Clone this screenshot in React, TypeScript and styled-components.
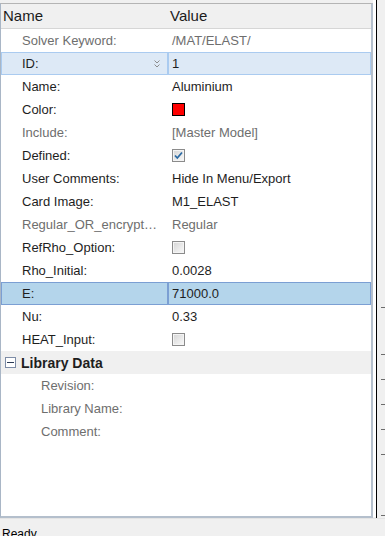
import React from "react";
import styled, { createGlobalStyle, css } from "styled-components";

const GlobalStyle = createGlobalStyle`
  html, body { margin: 0; padding: 0; background: #f0f0f0; }
  body { font-family: "Liberation Sans", Arial, sans-serif; }
  * { box-sizing: border-box; }
`;

const Frame = styled.div`
  width: 385px;
  height: 536px;
  display: flex;
  flex-direction: column;
  background: #f0f0f0;
  overflow: hidden;
`;

const Main = styled.div`
  display: flex;
  height: 518px;
  flex-shrink: 0;
`;

const Panel = styled.div`
  width: 373px;
  height: 515px;
  margin-top: 3px;
  background: #ffffff;
  border-top: 1px solid #b4b4b4;
  border-left: 1px solid #a9b6c6;
  border-right: 2px solid #b4bfcc;
  border-bottom: 2px solid #b4bfcc;
  display: flex;
  flex-direction: column;
`;

const Header = styled.div`
  display: grid;
  grid-template-columns: 167px 1fr;
  height: 25px;
  background: #f0f0f0;
  border-bottom: 1px solid #d6d6d6;
  font-size: 15px;
  line-height: 24px;
  color: #1b1b1b;
`;

const HeaderCell = styled.div`
  padding-left: 2px;
`;

const Row = styled.div`
  display: grid;
  grid-template-columns: 167px 1fr;
  height: 23px;
  font-size: 13px;
  line-height: 21px;
`;

type Sel = "focus" | "active" | undefined;

const cellSel = (sel: Sel) =>
  sel === "focus"
    ? css`
        background: #dde9f6;
        border-color: #aacbf0;
      `
    : sel === "active"
    ? css`
        background: #b4d5eb;
        border-color: #7b9fd3;
      `
    : css``;

const NameCell = styled.div<{ $sel?: Sel; $dim?: boolean; $indent: number }>`
  display: flex;
  align-items: center;
  justify-content: space-between;
  border: 1px solid transparent;
  padding-left: ${(p) => p.$indent}px;
  padding-right: 7px;
  color: ${(p) => (p.$dim ? "#6e6e6e" : "#1e1e1e")};
  white-space: nowrap;
  overflow: hidden;
  ${(p) => cellSel(p.$sel)}
`;

const ValueCell = styled.div<{ $sel?: Sel; $dim?: boolean }>`
  display: flex;
  align-items: center;
  border: 1px solid transparent;
  padding-left: 3px;
  color: ${(p) => (p.$dim ? "#6e6e6e" : "#1e1e1e")};
  white-space: nowrap;
  ${(p) => cellSel(p.$sel)}
`;

const Swatch = styled.div<{ $color: string }>`
  width: 13px;
  height: 13px;
  background: ${(p) => p.$color};
  border: 1px solid #000;
`;

const Check = styled.div`
  width: 13px;
  height: 13px;
  border: 1px solid #8b8b8b;
  background: linear-gradient(135deg, #d4d4d4 0%, #ebebeb 60%, #f8f8f8 100%);
  box-shadow: inset 0 0 0 1px #f4f4f4;
  display: flex;
  align-items: center;
  justify-content: center;
`;

const GroupRow = styled.div`
  display: flex;
  align-items: center;
  height: 23px;
  background: #f0f0f0;
  padding-left: 4px;
  gap: 5px;
  font-size: 14px;
  font-weight: bold;
  color: #1e1e1e;
`;

const Toggle = styled.div`
  width: 11px;
  height: 11px;
  border: 1px solid #7d8ca6;
  background: #fff;
  display: flex;
  align-items: center;
  justify-content: center;
  &::after {
    content: "";
    width: 7px;
    height: 1px;
    background: #2b3a55;
  }
`;

const Side = styled.div`
  display: flex;
  width: 12px;
`;

const Gap = styled.div`
  width: 3px;
  background: #ffffff;
  height: 517px;
`;

const VLine = styled.div`
  width: 1px;
  height: 518px;
  background: #000;
`;

const Ticks = styled.div`
  flex: 1;
  display: flex;
  flex-direction: column;
  align-items: flex-end;
  background: #f0f0f0;
`;

const Tick = styled.div<{ $top: number }>`
  margin-top: ${(p) => p.$top}px;
  width: 4px;
  height: 1px;
  background: #6c6c6c;
`;

const Status = styled.div`
  flex: 1;
  background: #f0f0f0;
  border-top: 1px solid #e4e4e4;
  padding: 8px 0 0 2px;
  font-size: 12px;
  line-height: 14px;
  color: #000;
  overflow: hidden;
`;

const Chevrons = () => (
  <svg width="6" height="8" viewBox="0 0 6 8">
    <path d="M0.5 0.5 L3 3 L5.5 0.5 M0.5 4.5 L3 7 L5.5 4.5" fill="none" stroke="#8c8c8c" strokeWidth="1" />
  </svg>
);

const CheckMark = () => (
  <svg width="11" height="11" viewBox="0 0 11 11">
    <path d="M2 5.5 L4.3 8 L9 2.5" fill="none" stroke="#2b6aa3" strokeWidth="1.8" />
  </svg>
);

type Item = {
  name: string;
  value?: string;
  dim?: boolean;
  sel?: Sel;
  chevron?: boolean;
  swatch?: string;
  check?: boolean;
};

const items: Item[] = [
  { name: "Solver Keyword:", value: "/MAT/ELAST/", dim: true },
  { name: "ID:", value: "1", sel: "focus", chevron: true },
  { name: "Name:", value: "Aluminium" },
  { name: "Color:", swatch: "#ff0000" },
  { name: "Include:", value: "[Master Model]", dim: true },
  { name: "Defined:", check: true },
  { name: "User Comments:", value: "Hide In Menu/Export" },
  { name: "Card Image:", value: "M1_ELAST" },
  { name: "Regular_OR_encrypt\u2026", value: "Regular", dim: true },
  { name: "RefRho_Option:", check: false },
  { name: "Rho_Initial:", value: "0.0028" },
  { name: "E:", value: "71000.0", sel: "active" },
  { name: "Nu:", value: "0.33" },
  { name: "HEAT_Input:", check: false },
];

const libItems = ["Revision:", "Library Name:", "Comment:"];

const PropRow = ({ item, indent }: { item: Item; indent: number }) => (
  <Row>
    <NameCell $sel={item.sel} $dim={item.dim} $indent={indent}>
      <span>{item.name}</span>
      {item.chevron && <Chevrons />}
    </NameCell>
    <ValueCell $sel={item.sel} $dim={item.dim}>
      {item.swatch && <Swatch $color={item.swatch} />}
      {item.check !== undefined && <Check>{item.check && <CheckMark />}</Check>}
      {item.value}
    </ValueCell>
  </Row>
);

export default function App() {
  return (
    <>
      <GlobalStyle />
      <Frame>
        <Main>
          <Panel>
            <Header>
              <HeaderCell>Name</HeaderCell>
              <HeaderCell>Value</HeaderCell>
            </Header>
            {items.map((it) => (
              <PropRow key={it.name} item={it} indent={20} />
            ))}
            <GroupRow>
              <Toggle />
              Library Data
            </GroupRow>
            {libItems.map((n) => (
              <PropRow key={n} item={{ name: n, dim: true }} indent={39} />
            ))}
          </Panel>
          <Side>
            <Gap />
            <VLine />
            <Ticks>
              <Tick $top={307} />
              <Tick $top={46} />
              <Tick $top={24} />
              <Tick $top={24} />
              <Tick $top={24} />
              <Tick $top={24} />
              <Tick $top={60} />
            </Ticks>
          </Side>
        </Main>
        <Status>Ready</Status>
      </Frame>
    </>
  );
}
